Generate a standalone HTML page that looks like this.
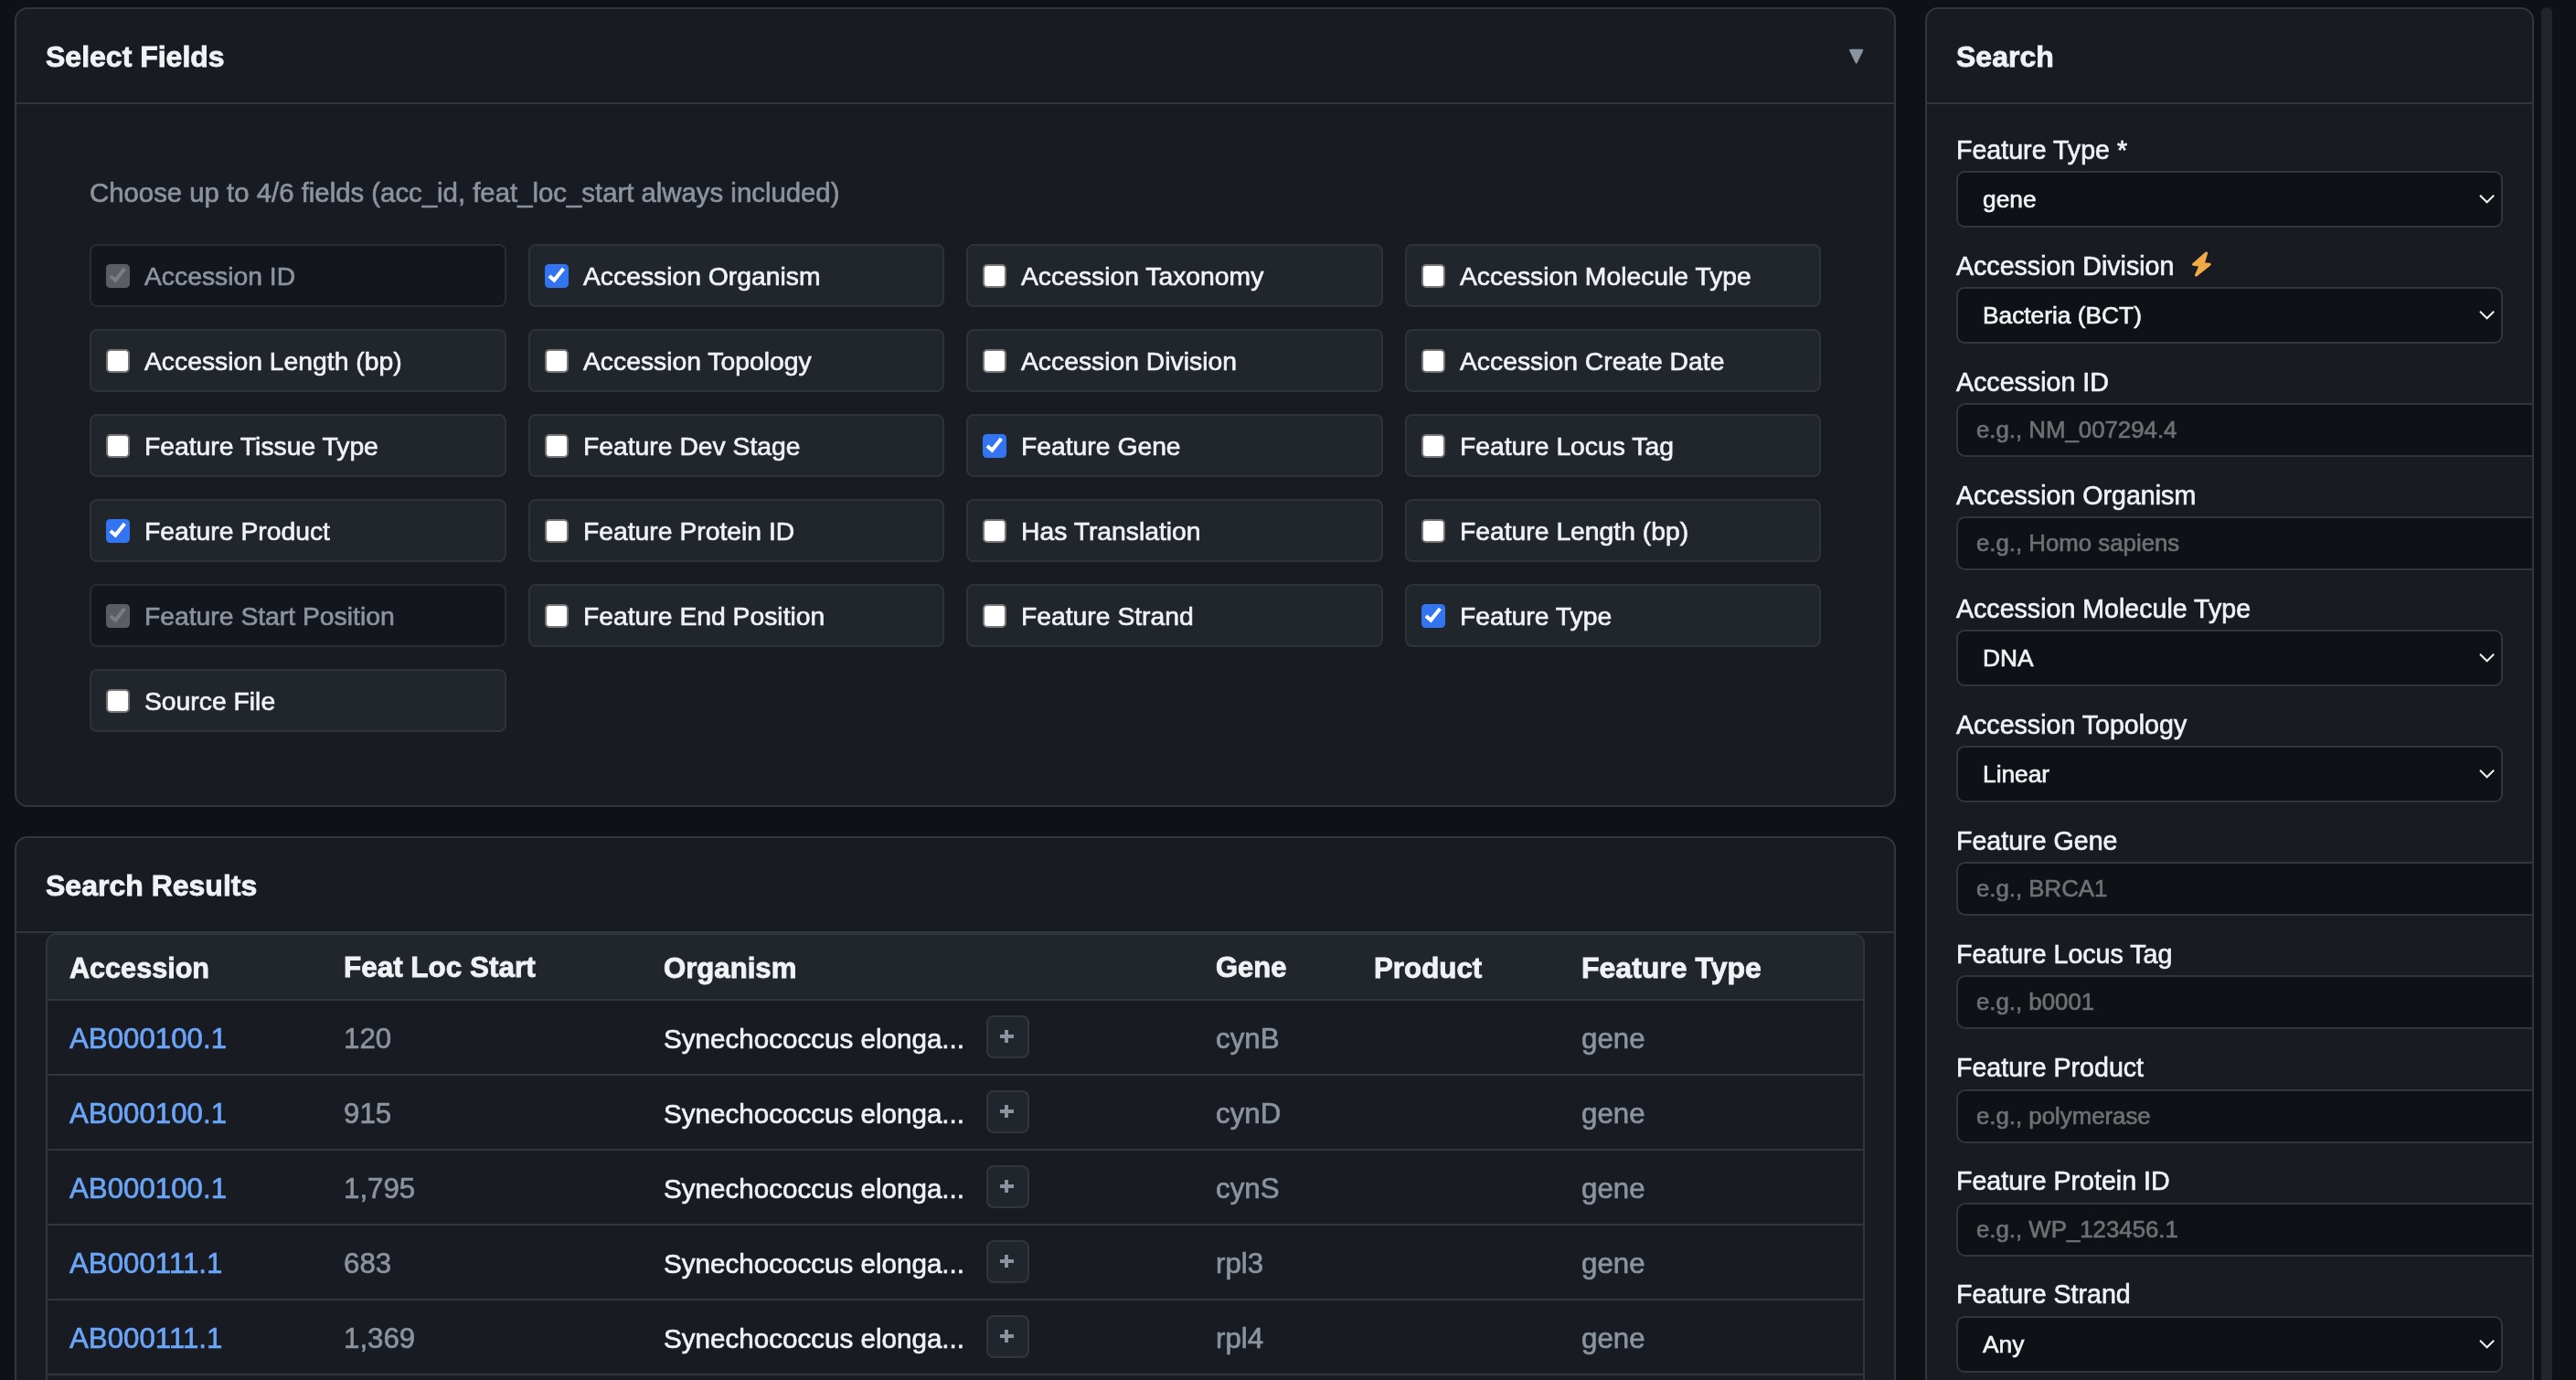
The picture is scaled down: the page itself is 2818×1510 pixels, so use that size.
<!DOCTYPE html><html><head><meta charset="utf-8"><style>
html,body{margin:0;padding:0;}
body{width:2818px;height:1510px;overflow:hidden;background:#0e1115;position:relative;font-family:"Liberation Sans",sans-serif;}
.t{position:absolute;white-space:nowrap;line-height:1;-webkit-text-stroke:0.65px currentColor;will-change:transform;}
.box{position:absolute;box-sizing:border-box;}
</style></head><body>
<div class="box" style="left:16px;top:8px;width:2058px;height:875px;background:#181b22;border:2px solid #30363d;border-radius:14px;"></div>
<div class="box" style="left:18px;top:112px;width:2054px;height:2px;background:#30363d;"></div>
<div class="t" style="left:50.0px;top:45.9px;font-size:32px;color:#f0f3f6;font-weight:700;-webkit-text-stroke:0.85px currentColor;">Select Fields</div>
<svg style="position:absolute;left:2022px;top:53px" width="18" height="18" viewBox="0 0 18 18"><path d="M2.2 1.9 L15.2 1.9 L8.7 15.4 Z" fill="#8b949e" stroke="#8b949e" stroke-width="2.2" stroke-linejoin="round"/></svg>
<div class="t" style="left:97.5px;top:196.2px;font-size:29.35px;color:#8b949e;font-weight:400;">Choose up to 4/6 fields (acc_id, feat_loc_start always included)</div>
<div class="box" style="left:98px;top:267px;width:456px;height:68.5px;background:#13161c;border:2px solid #282c33;border-radius:8px;"></div>
<svg style="position:absolute;left:116px;top:288.5px" width="26" height="26" viewBox="0 0 26 26"><rect x="0" y="0" width="26" height="26" rx="4.5" fill="#5a5e63"/><path d="M4.9 12.9 L10.3 17.6 L20.4 4.9" fill="none" stroke="#7b7d82" stroke-width="4"/></svg>
<div class="t" style="left:158.0px;top:287.5px;font-size:28.3px;color:#8b949e;font-weight:400;">Accession ID</div>
<div class="box" style="left:578px;top:267px;width:455px;height:68.5px;background:#21252c;border:2px solid #2e3239;border-radius:8px;"></div>
<svg style="position:absolute;left:596px;top:288.5px" width="26" height="26" viewBox="0 0 26 26"><rect x="0" y="0" width="26" height="26" rx="4.5" fill="#3274f2"/><path d="M4.9 12.9 L10.3 17.6 L20.4 4.9" fill="none" stroke="#ffffff" stroke-width="4"/></svg>
<div class="t" style="left:638.0px;top:287.5px;font-size:28.3px;color:#f0f3f6;font-weight:400;">Accession Organism</div>
<div class="box" style="left:1057px;top:267px;width:456px;height:68.5px;background:#21252c;border:2px solid #2e3239;border-radius:8px;"></div>
<div class="box" style="left:1075px;top:288.5px;width:26px;height:26px;background:#fff;border:2px solid #767676;border-radius:5px;"></div>
<div class="t" style="left:1117.0px;top:287.5px;font-size:28.3px;color:#f0f3f6;font-weight:400;">Accession Taxonomy</div>
<div class="box" style="left:1537px;top:267px;width:455px;height:68.5px;background:#21252c;border:2px solid #2e3239;border-radius:8px;"></div>
<div class="box" style="left:1555px;top:288.5px;width:26px;height:26px;background:#fff;border:2px solid #767676;border-radius:5px;"></div>
<div class="t" style="left:1597.0px;top:287.5px;font-size:28.3px;color:#f0f3f6;font-weight:400;">Accession Molecule Type</div>
<div class="box" style="left:98px;top:360px;width:456px;height:68.5px;background:#21252c;border:2px solid #2e3239;border-radius:8px;"></div>
<div class="box" style="left:116px;top:381.5px;width:26px;height:26px;background:#fff;border:2px solid #767676;border-radius:5px;"></div>
<div class="t" style="left:158.0px;top:380.5px;font-size:28.3px;color:#f0f3f6;font-weight:400;">Accession Length (bp)</div>
<div class="box" style="left:578px;top:360px;width:455px;height:68.5px;background:#21252c;border:2px solid #2e3239;border-radius:8px;"></div>
<div class="box" style="left:596px;top:381.5px;width:26px;height:26px;background:#fff;border:2px solid #767676;border-radius:5px;"></div>
<div class="t" style="left:638.0px;top:380.5px;font-size:28.3px;color:#f0f3f6;font-weight:400;">Accession Topology</div>
<div class="box" style="left:1057px;top:360px;width:456px;height:68.5px;background:#21252c;border:2px solid #2e3239;border-radius:8px;"></div>
<div class="box" style="left:1075px;top:381.5px;width:26px;height:26px;background:#fff;border:2px solid #767676;border-radius:5px;"></div>
<div class="t" style="left:1117.0px;top:380.5px;font-size:28.3px;color:#f0f3f6;font-weight:400;">Accession Division</div>
<div class="box" style="left:1537px;top:360px;width:455px;height:68.5px;background:#21252c;border:2px solid #2e3239;border-radius:8px;"></div>
<div class="box" style="left:1555px;top:381.5px;width:26px;height:26px;background:#fff;border:2px solid #767676;border-radius:5px;"></div>
<div class="t" style="left:1597.0px;top:380.5px;font-size:28.3px;color:#f0f3f6;font-weight:400;">Accession Create Date</div>
<div class="box" style="left:98px;top:453px;width:456px;height:68.5px;background:#21252c;border:2px solid #2e3239;border-radius:8px;"></div>
<div class="box" style="left:116px;top:474.5px;width:26px;height:26px;background:#fff;border:2px solid #767676;border-radius:5px;"></div>
<div class="t" style="left:158.0px;top:473.5px;font-size:28.3px;color:#f0f3f6;font-weight:400;">Feature Tissue Type</div>
<div class="box" style="left:578px;top:453px;width:455px;height:68.5px;background:#21252c;border:2px solid #2e3239;border-radius:8px;"></div>
<div class="box" style="left:596px;top:474.5px;width:26px;height:26px;background:#fff;border:2px solid #767676;border-radius:5px;"></div>
<div class="t" style="left:638.0px;top:473.5px;font-size:28.3px;color:#f0f3f6;font-weight:400;">Feature Dev Stage</div>
<div class="box" style="left:1057px;top:453px;width:456px;height:68.5px;background:#21252c;border:2px solid #2e3239;border-radius:8px;"></div>
<svg style="position:absolute;left:1075px;top:474.5px" width="26" height="26" viewBox="0 0 26 26"><rect x="0" y="0" width="26" height="26" rx="4.5" fill="#3274f2"/><path d="M4.9 12.9 L10.3 17.6 L20.4 4.9" fill="none" stroke="#ffffff" stroke-width="4"/></svg>
<div class="t" style="left:1117.0px;top:473.5px;font-size:28.3px;color:#f0f3f6;font-weight:400;">Feature Gene</div>
<div class="box" style="left:1537px;top:453px;width:455px;height:68.5px;background:#21252c;border:2px solid #2e3239;border-radius:8px;"></div>
<div class="box" style="left:1555px;top:474.5px;width:26px;height:26px;background:#fff;border:2px solid #767676;border-radius:5px;"></div>
<div class="t" style="left:1597.0px;top:473.5px;font-size:28.3px;color:#f0f3f6;font-weight:400;">Feature Locus Tag</div>
<div class="box" style="left:98px;top:546px;width:456px;height:68.5px;background:#21252c;border:2px solid #2e3239;border-radius:8px;"></div>
<svg style="position:absolute;left:116px;top:567.5px" width="26" height="26" viewBox="0 0 26 26"><rect x="0" y="0" width="26" height="26" rx="4.5" fill="#3274f2"/><path d="M4.9 12.9 L10.3 17.6 L20.4 4.9" fill="none" stroke="#ffffff" stroke-width="4"/></svg>
<div class="t" style="left:158.0px;top:566.5px;font-size:28.3px;color:#f0f3f6;font-weight:400;">Feature Product</div>
<div class="box" style="left:578px;top:546px;width:455px;height:68.5px;background:#21252c;border:2px solid #2e3239;border-radius:8px;"></div>
<div class="box" style="left:596px;top:567.5px;width:26px;height:26px;background:#fff;border:2px solid #767676;border-radius:5px;"></div>
<div class="t" style="left:638.0px;top:566.5px;font-size:28.3px;color:#f0f3f6;font-weight:400;">Feature Protein ID</div>
<div class="box" style="left:1057px;top:546px;width:456px;height:68.5px;background:#21252c;border:2px solid #2e3239;border-radius:8px;"></div>
<div class="box" style="left:1075px;top:567.5px;width:26px;height:26px;background:#fff;border:2px solid #767676;border-radius:5px;"></div>
<div class="t" style="left:1117.0px;top:566.5px;font-size:28.3px;color:#f0f3f6;font-weight:400;">Has Translation</div>
<div class="box" style="left:1537px;top:546px;width:455px;height:68.5px;background:#21252c;border:2px solid #2e3239;border-radius:8px;"></div>
<div class="box" style="left:1555px;top:567.5px;width:26px;height:26px;background:#fff;border:2px solid #767676;border-radius:5px;"></div>
<div class="t" style="left:1597.0px;top:566.5px;font-size:28.3px;color:#f0f3f6;font-weight:400;">Feature Length (bp)</div>
<div class="box" style="left:98px;top:639px;width:456px;height:68.5px;background:#13161c;border:2px solid #282c33;border-radius:8px;"></div>
<svg style="position:absolute;left:116px;top:660.5px" width="26" height="26" viewBox="0 0 26 26"><rect x="0" y="0" width="26" height="26" rx="4.5" fill="#5a5e63"/><path d="M4.9 12.9 L10.3 17.6 L20.4 4.9" fill="none" stroke="#7b7d82" stroke-width="4"/></svg>
<div class="t" style="left:158.0px;top:659.5px;font-size:28.3px;color:#8b949e;font-weight:400;">Feature Start Position</div>
<div class="box" style="left:578px;top:639px;width:455px;height:68.5px;background:#21252c;border:2px solid #2e3239;border-radius:8px;"></div>
<div class="box" style="left:596px;top:660.5px;width:26px;height:26px;background:#fff;border:2px solid #767676;border-radius:5px;"></div>
<div class="t" style="left:638.0px;top:659.5px;font-size:28.3px;color:#f0f3f6;font-weight:400;">Feature End Position</div>
<div class="box" style="left:1057px;top:639px;width:456px;height:68.5px;background:#21252c;border:2px solid #2e3239;border-radius:8px;"></div>
<div class="box" style="left:1075px;top:660.5px;width:26px;height:26px;background:#fff;border:2px solid #767676;border-radius:5px;"></div>
<div class="t" style="left:1117.0px;top:659.5px;font-size:28.3px;color:#f0f3f6;font-weight:400;">Feature Strand</div>
<div class="box" style="left:1537px;top:639px;width:455px;height:68.5px;background:#21252c;border:2px solid #2e3239;border-radius:8px;"></div>
<svg style="position:absolute;left:1555px;top:660.5px" width="26" height="26" viewBox="0 0 26 26"><rect x="0" y="0" width="26" height="26" rx="4.5" fill="#3274f2"/><path d="M4.9 12.9 L10.3 17.6 L20.4 4.9" fill="none" stroke="#ffffff" stroke-width="4"/></svg>
<div class="t" style="left:1597.0px;top:659.5px;font-size:28.3px;color:#f0f3f6;font-weight:400;">Feature Type</div>
<div class="box" style="left:98px;top:732px;width:456px;height:68.5px;background:#21252c;border:2px solid #2e3239;border-radius:8px;"></div>
<div class="box" style="left:116px;top:753.5px;width:26px;height:26px;background:#fff;border:2px solid #767676;border-radius:5px;"></div>
<div class="t" style="left:158.0px;top:752.5px;font-size:28.3px;color:#f0f3f6;font-weight:400;">Source File</div>
<div class="box" style="left:16px;top:915px;width:2058px;height:700px;background:#181b22;border:2px solid #30363d;border-radius:14px;"></div>
<div class="box" style="left:18px;top:1019px;width:2054px;height:2px;background:#30363d;"></div>
<div class="t" style="left:50.0px;top:952.9px;font-size:32px;color:#f0f3f6;font-weight:700;-webkit-text-stroke:0.85px currentColor;">Search Results</div>
<div class="box" style="left:50px;top:1021px;width:1990px;height:600px;border:2px solid #30363d;border-radius:12px;overflow:hidden;"><div style="position:absolute;left:0;top:0;right:0;height:70px;background:#21252c;border-bottom:2px solid #30363d;"></div></div>
<div class="t" style="left:76.0px;top:1044.1px;font-size:30.6px;color:#f0f3f6;font-weight:700;-webkit-text-stroke:0.85px currentColor;">Accession</div>
<div class="t" style="left:376.0px;top:1043.4px;font-size:31.45px;color:#f0f3f6;font-weight:700;-webkit-text-stroke:0.85px currentColor;">Feat Loc Start</div>
<div class="t" style="left:725.5px;top:1043.6px;font-size:31.15px;color:#f0f3f6;font-weight:700;-webkit-text-stroke:0.85px currentColor;">Organism</div>
<div class="t" style="left:1329.6px;top:1043.8px;font-size:30.95px;color:#f0f3f6;font-weight:700;-webkit-text-stroke:0.85px currentColor;">Gene</div>
<div class="t" style="left:1503.0px;top:1043.5px;font-size:31.3px;color:#f0f3f6;font-weight:700;-webkit-text-stroke:0.85px currentColor;">Product</div>
<div class="t" style="left:1730.0px;top:1042.9px;font-size:32px;color:#f0f3f6;font-weight:700;-webkit-text-stroke:0.85px currentColor;">Feature Type</div>
<div class="t" style="left:76.0px;top:1120.5px;font-size:31.25px;color:#6aa5f8;font-weight:400;">AB000100.1</div>
<div class="t" style="left:376.0px;top:1120.5px;font-size:31.25px;color:#8b949e;font-weight:400;">120</div>
<div class="t" style="left:725.5px;top:1121.9px;font-size:29.6px;color:#f0f3f6;font-weight:400;">Synechococcus elonga...</div>
<div class="box" style="left:1078.5px;top:1111.3px;width:47px;height:47px;background:#21252c;border:2px solid #30363d;border-radius:8px;"></div>
<div class="box" style="left:1094px;top:1132.2px;width:15px;height:4px;background:#8b949e;"></div>
<div class="box" style="left:1099.3px;top:1127px;width:4.2px;height:14px;background:#8b949e;"></div>
<div class="t" style="left:1329.6px;top:1120.5px;font-size:31.25px;color:#8b949e;font-weight:400;">cynB</div>
<div class="t" style="left:1730.0px;top:1120.5px;font-size:31.25px;color:#8b949e;font-weight:400;">gene</div>
<div class="box" style="left:52px;top:1175px;width:1986px;height:2px;background:#30363d;"></div>
<div class="t" style="left:76.0px;top:1202.5px;font-size:31.25px;color:#6aa5f8;font-weight:400;">AB000100.1</div>
<div class="t" style="left:376.0px;top:1202.5px;font-size:31.25px;color:#8b949e;font-weight:400;">915</div>
<div class="t" style="left:725.5px;top:1203.9px;font-size:29.6px;color:#f0f3f6;font-weight:400;">Synechococcus elonga...</div>
<div class="box" style="left:1078.5px;top:1193.3px;width:47px;height:47px;background:#21252c;border:2px solid #30363d;border-radius:8px;"></div>
<div class="box" style="left:1094px;top:1214.2px;width:15px;height:4px;background:#8b949e;"></div>
<div class="box" style="left:1099.3px;top:1209px;width:4.2px;height:14px;background:#8b949e;"></div>
<div class="t" style="left:1329.6px;top:1202.5px;font-size:31.25px;color:#8b949e;font-weight:400;">cynD</div>
<div class="t" style="left:1730.0px;top:1202.5px;font-size:31.25px;color:#8b949e;font-weight:400;">gene</div>
<div class="box" style="left:52px;top:1257px;width:1986px;height:2px;background:#30363d;"></div>
<div class="t" style="left:76.0px;top:1284.5px;font-size:31.25px;color:#6aa5f8;font-weight:400;">AB000100.1</div>
<div class="t" style="left:376.0px;top:1284.5px;font-size:31.25px;color:#8b949e;font-weight:400;">1,795</div>
<div class="t" style="left:725.5px;top:1285.9px;font-size:29.6px;color:#f0f3f6;font-weight:400;">Synechococcus elonga...</div>
<div class="box" style="left:1078.5px;top:1275.3px;width:47px;height:47px;background:#21252c;border:2px solid #30363d;border-radius:8px;"></div>
<div class="box" style="left:1094px;top:1296.2px;width:15px;height:4px;background:#8b949e;"></div>
<div class="box" style="left:1099.3px;top:1291px;width:4.2px;height:14px;background:#8b949e;"></div>
<div class="t" style="left:1329.6px;top:1284.5px;font-size:31.25px;color:#8b949e;font-weight:400;">cynS</div>
<div class="t" style="left:1730.0px;top:1284.5px;font-size:31.25px;color:#8b949e;font-weight:400;">gene</div>
<div class="box" style="left:52px;top:1339px;width:1986px;height:2px;background:#30363d;"></div>
<div class="t" style="left:76.0px;top:1366.5px;font-size:31.25px;color:#6aa5f8;font-weight:400;">AB000111.1</div>
<div class="t" style="left:376.0px;top:1366.5px;font-size:31.25px;color:#8b949e;font-weight:400;">683</div>
<div class="t" style="left:725.5px;top:1367.9px;font-size:29.6px;color:#f0f3f6;font-weight:400;">Synechococcus elonga...</div>
<div class="box" style="left:1078.5px;top:1357.3px;width:47px;height:47px;background:#21252c;border:2px solid #30363d;border-radius:8px;"></div>
<div class="box" style="left:1094px;top:1378.2px;width:15px;height:4px;background:#8b949e;"></div>
<div class="box" style="left:1099.3px;top:1373px;width:4.2px;height:14px;background:#8b949e;"></div>
<div class="t" style="left:1329.6px;top:1366.5px;font-size:31.25px;color:#8b949e;font-weight:400;">rpl3</div>
<div class="t" style="left:1730.0px;top:1366.5px;font-size:31.25px;color:#8b949e;font-weight:400;">gene</div>
<div class="box" style="left:52px;top:1421px;width:1986px;height:2px;background:#30363d;"></div>
<div class="t" style="left:76.0px;top:1448.5px;font-size:31.25px;color:#6aa5f8;font-weight:400;">AB000111.1</div>
<div class="t" style="left:376.0px;top:1448.5px;font-size:31.25px;color:#8b949e;font-weight:400;">1,369</div>
<div class="t" style="left:725.5px;top:1449.9px;font-size:29.6px;color:#f0f3f6;font-weight:400;">Synechococcus elonga...</div>
<div class="box" style="left:1078.5px;top:1439.3px;width:47px;height:47px;background:#21252c;border:2px solid #30363d;border-radius:8px;"></div>
<div class="box" style="left:1094px;top:1460.2px;width:15px;height:4px;background:#8b949e;"></div>
<div class="box" style="left:1099.3px;top:1455px;width:4.2px;height:14px;background:#8b949e;"></div>
<div class="t" style="left:1329.6px;top:1448.5px;font-size:31.25px;color:#8b949e;font-weight:400;">rpl4</div>
<div class="t" style="left:1730.0px;top:1448.5px;font-size:31.25px;color:#8b949e;font-weight:400;">gene</div>
<div class="box" style="left:52px;top:1503px;width:1986px;height:2px;background:#30363d;"></div>
<div class="t" style="left:76.0px;top:1530.5px;font-size:31.25px;color:#6aa5f8;font-weight:400;">AB000111.1</div>
<div class="t" style="left:376.0px;top:1530.5px;font-size:31.25px;color:#8b949e;font-weight:400;">2,100</div>
<div class="t" style="left:725.5px;top:1531.9px;font-size:29.6px;color:#f0f3f6;font-weight:400;">Synechococcus elonga...</div>
<div class="box" style="left:1078.5px;top:1521.3px;width:47px;height:47px;background:#21252c;border:2px solid #30363d;border-radius:8px;"></div>
<div class="box" style="left:1094px;top:1542.2px;width:15px;height:4px;background:#8b949e;"></div>
<div class="box" style="left:1099.3px;top:1537px;width:4.2px;height:14px;background:#8b949e;"></div>
<div class="t" style="left:1329.6px;top:1530.5px;font-size:31.25px;color:#8b949e;font-weight:400;">rpl23</div>
<div class="t" style="left:1730.0px;top:1530.5px;font-size:31.25px;color:#8b949e;font-weight:400;">gene</div>
<div class="box" style="left:2106px;top:8px;width:666px;height:1600px;background:#181b22;border:2px solid #30363d;border-radius:14px;overflow:hidden;"><div style="position:absolute;left:0;top:102px;width:100%;height:2px;background:#30363d;"></div></div>
<div class="t" style="left:2140.0px;top:45.9px;font-size:32px;color:#f0f3f6;font-weight:700;-webkit-text-stroke:0.85px currentColor;">Search</div>
<div class="box" style="left:2780px;top:8px;width:12px;height:1600px;background:#22252c;border-radius:6px;"></div>
<div class="t" style="left:2140.0px;top:149.9px;font-size:28.6px;color:#f0f3f6;font-weight:400;">Feature Type *</div>
<div class="box" style="left:2140px;top:187px;width:598px;height:62px;background:#0e1116;border:2px solid #30363d;border-radius:9px;"></div>
<div class="t" style="left:2169.0px;top:205.2px;font-size:26.3px;color:#f0f3f6;font-weight:400;">gene</div>
<svg style="position:absolute;left:2710px;top:211px" width="22" height="14" viewBox="0 0 22 14"><path d="M3 2.7 L10.6 10.3 L18.2 2.7" fill="none" stroke="#eef0f2" stroke-width="2"/></svg>
<div class="t" style="left:2140.0px;top:276.7px;font-size:28.6px;color:#f0f3f6;font-weight:400;">Accession Division </div>
<svg style="position:absolute;left:2395px;top:273px" width="26" height="32" viewBox="0 0 26 32"><path d="M18.6 4.0 L4.5 16.3 L12.2 17.3 L7.5 28.2 L22.2 16.3 L15.1 15.8 Z" fill="#f0aa45" stroke="#f0aa45" stroke-width="3" stroke-linejoin="round"/></svg>
<div class="box" style="left:2140px;top:314px;width:598px;height:62px;background:#0e1116;border:2px solid #30363d;border-radius:9px;"></div>
<div class="t" style="left:2169.0px;top:332.2px;font-size:26.3px;color:#f0f3f6;font-weight:400;">Bacteria (BCT)</div>
<svg style="position:absolute;left:2710px;top:338px" width="22" height="14" viewBox="0 0 22 14"><path d="M3 2.7 L10.6 10.3 L18.2 2.7" fill="none" stroke="#eef0f2" stroke-width="2"/></svg>
<div class="t" style="left:2140.0px;top:403.5px;font-size:28.6px;color:#f0f3f6;font-weight:400;">Accession ID</div>
<div class="box" style="left:2140px;top:441px;width:632px;height:59px;background:#0e1116;border:2px solid #30363d;border-right:none;border-radius:10px 0 0 10px;"></div>
<div class="t" style="left:2161.5px;top:458.4px;font-size:25.8px;color:#6e7174;font-weight:400;">e.g., NM_007294.4</div>
<div class="t" style="left:2140.0px;top:527.7px;font-size:28.6px;color:#f0f3f6;font-weight:400;">Accession Organism</div>
<div class="box" style="left:2140px;top:565px;width:632px;height:59px;background:#0e1116;border:2px solid #30363d;border-right:none;border-radius:10px 0 0 10px;"></div>
<div class="t" style="left:2161.5px;top:582.4px;font-size:25.8px;color:#6e7174;font-weight:400;">e.g., Homo sapiens</div>
<div class="t" style="left:2140.0px;top:651.9px;font-size:28.6px;color:#f0f3f6;font-weight:400;">Accession Molecule Type</div>
<div class="box" style="left:2140px;top:689px;width:598px;height:62px;background:#0e1116;border:2px solid #30363d;border-radius:9px;"></div>
<div class="t" style="left:2169.0px;top:707.2px;font-size:26.3px;color:#f0f3f6;font-weight:400;">DNA</div>
<svg style="position:absolute;left:2710px;top:713px" width="22" height="14" viewBox="0 0 22 14"><path d="M3 2.7 L10.6 10.3 L18.2 2.7" fill="none" stroke="#eef0f2" stroke-width="2"/></svg>
<div class="t" style="left:2140.0px;top:778.7px;font-size:28.6px;color:#f0f3f6;font-weight:400;">Accession Topology</div>
<div class="box" style="left:2140px;top:816px;width:598px;height:62px;background:#0e1116;border:2px solid #30363d;border-radius:9px;"></div>
<div class="t" style="left:2169.0px;top:834.2px;font-size:26.3px;color:#f0f3f6;font-weight:400;">Linear</div>
<svg style="position:absolute;left:2710px;top:840px" width="22" height="14" viewBox="0 0 22 14"><path d="M3 2.7 L10.6 10.3 L18.2 2.7" fill="none" stroke="#eef0f2" stroke-width="2"/></svg>
<div class="t" style="left:2140.0px;top:905.5px;font-size:28.6px;color:#f0f3f6;font-weight:400;">Feature Gene</div>
<div class="box" style="left:2140px;top:943px;width:632px;height:59px;background:#0e1116;border:2px solid #30363d;border-right:none;border-radius:10px 0 0 10px;"></div>
<div class="t" style="left:2161.5px;top:960.4px;font-size:25.8px;color:#6e7174;font-weight:400;">e.g., BRCA1</div>
<div class="t" style="left:2140.0px;top:1029.7px;font-size:28.6px;color:#f0f3f6;font-weight:400;">Feature Locus Tag</div>
<div class="box" style="left:2140px;top:1067px;width:632px;height:59px;background:#0e1116;border:2px solid #30363d;border-right:none;border-radius:10px 0 0 10px;"></div>
<div class="t" style="left:2161.5px;top:1084.4px;font-size:25.8px;color:#6e7174;font-weight:400;">e.g., b0001</div>
<div class="t" style="left:2140.0px;top:1153.9px;font-size:28.6px;color:#f0f3f6;font-weight:400;">Feature Product</div>
<div class="box" style="left:2140px;top:1192px;width:632px;height:59px;background:#0e1116;border:2px solid #30363d;border-right:none;border-radius:10px 0 0 10px;"></div>
<div class="t" style="left:2161.5px;top:1209.4px;font-size:25.8px;color:#6e7174;font-weight:400;">e.g., polymerase</div>
<div class="t" style="left:2140.0px;top:1278.1px;font-size:28.6px;color:#f0f3f6;font-weight:400;">Feature Protein ID</div>
<div class="box" style="left:2140px;top:1316px;width:632px;height:59px;background:#0e1116;border:2px solid #30363d;border-right:none;border-radius:10px 0 0 10px;"></div>
<div class="t" style="left:2161.5px;top:1333.4px;font-size:25.8px;color:#6e7174;font-weight:400;">e.g., WP_123456.1</div>
<div class="t" style="left:2140.0px;top:1402.3px;font-size:28.6px;color:#f0f3f6;font-weight:400;">Feature Strand</div>
<div class="box" style="left:2140px;top:1440px;width:598px;height:62px;background:#0e1116;border:2px solid #30363d;border-radius:9px;"></div>
<div class="t" style="left:2169.0px;top:1458.2px;font-size:26.3px;color:#f0f3f6;font-weight:400;">Any</div>
<svg style="position:absolute;left:2710px;top:1464px" width="22" height="14" viewBox="0 0 22 14"><path d="M3 2.7 L10.6 10.3 L18.2 2.7" fill="none" stroke="#eef0f2" stroke-width="2"/></svg>
<div class="box" style="left:2770px;top:40px;width:2px;height:1480px;background:#30363d;"></div>
<div class="box" style="left:2772px;top:0px;width:8px;height:1510px;background:#0e1115;"></div>
</body></html>
